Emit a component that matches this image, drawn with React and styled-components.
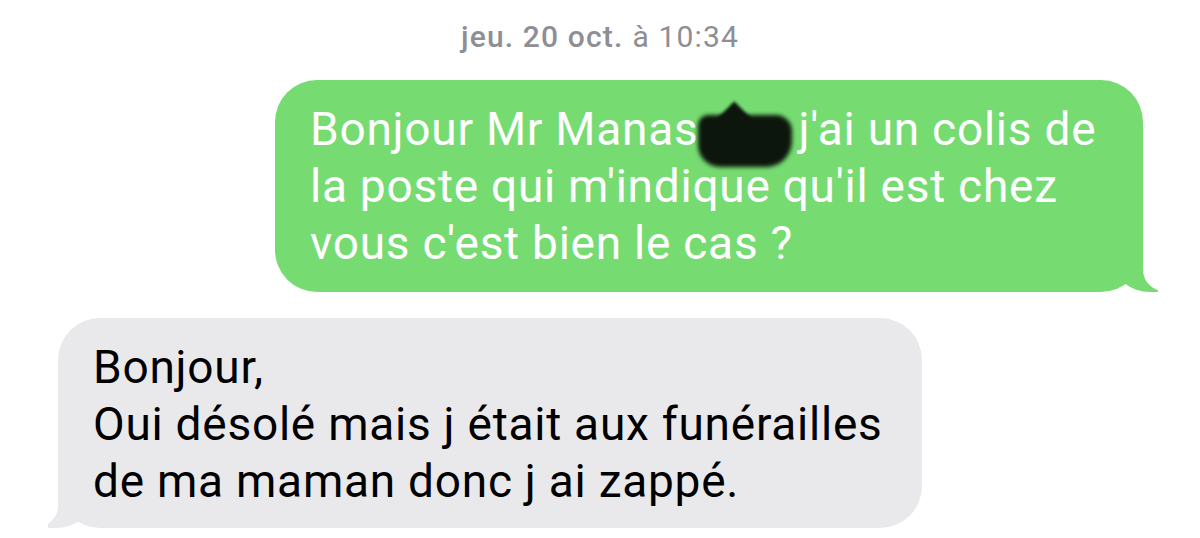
import React from 'react';
import styled, { createGlobalStyle } from 'styled-components';

const GlobalStyle = createGlobalStyle`
  html, body {
    margin: 0;
    padding: 0;
    background: #ffffff;
  }
  body {
    font-family: Roboto, "Liberation Sans", Arial, sans-serif;
    -webkit-font-smoothing: antialiased;
  }
`;

const Thread = styled.div`
  width: 1200px;
  height: 538px;
  overflow: hidden;
  display: flex;
  flex-direction: column;
  background: #ffffff;
`;

const Stamp = styled.div`
  height: 80px;
  display: flex;
  justify-content: center;
  align-items: flex-start;
  padding: 19px 0 0 0;
  box-sizing: border-box;
  font-size: 30px;
  color: #8e8e93;
  letter-spacing: 1.15px;

  b {
    font-weight: 500;
    margin-right: 9px;
  }
`;

const Row = styled.div`
  display: flex;
  justify-content: ${(p) => (p.$mine ? 'flex-end' : 'flex-start')};
  padding: ${(p) => (p.$mine ? '0 57px 0 0' : '0 0 0 58px')};
  margin-bottom: ${(p) => (p.$mine ? '26px' : '0')};
`;

const Bubble = styled.div`
  position: relative;
  width: ${(p) => p.$width}px;
  height: ${(p) => p.$height}px;
  box-sizing: border-box;
  padding: 21px 0 0 35px;
  border-radius: 42px;
  background: ${(p) => (p.$mine ? '#76dc72' : '#e9e9eb')};
  color: ${(p) => (p.$mine ? '#ffffff' : '#000000')};
  font-size: 46px;
  line-height: 57px;
  letter-spacing: 0.75px;

  &::before {
    content: '';
    position: absolute;
    bottom: 0;
    ${(p) => (p.$mine ? 'right: -15px;' : 'left: -10px;')}
    width: 44px;
    height: 46px;
    background: ${(p) => (p.$mine ? '#76dc72' : '#e9e9eb')};
    ${(p) =>
      p.$mine
        ? 'border-bottom-left-radius: 36px 30px;'
        : 'border-bottom-right-radius: 36px 30px;'}
  }

  &::after {
    content: '';
    position: absolute;
    bottom: 0;
    ${(p) => (p.$mine ? 'right: -60px;' : 'left: -60px;')}
    width: 60px;
    height: 48px;
    background: #ffffff;
    ${(p) =>
      p.$mine
        ? 'border-bottom-left-radius: 24px 22px;'
        : 'border-bottom-right-radius: 24px 22px;'}
  }
`;

const Line = styled.div`
  position: relative;
  z-index: 1;
  white-space: nowrap;
`;

// the blacked-out part of the name
const Scribble = styled.span`
  display: inline-block;
  position: relative;
  width: 100px;
  height: 1em;
  vertical-align: -6px;

  &::before {
    content: '';
    position: absolute;
    left: 0;
    top: 10px;
    width: 94px;
    height: 52px;
    background: #0d160d;
    border-radius: 10px 16px 26px 22px;
    filter: blur(2px);
  }

  &::after {
    content: '';
    position: absolute;
    left: 24px;
    top: 2px;
    width: 26px;
    height: 24px;
    background: #0d160d;
    transform: rotate(45deg);
    filter: blur(1.5px);
  }
`;

export default function App() {
  return (
    <>
      <GlobalStyle />
      <Thread>
        <Stamp>
          <b>jeu. 20 oct.</b>
          <span>à 10:34</span>
        </Stamp>

        <Row $mine>
          <Bubble $mine $width={868} $height={212}>
            <Line>
              Bonjour Mr Manas<Scribble />j'ai un colis de
            </Line>
            <Line>la poste qui m'indique qu'il est chez</Line>
            <Line>vous c'est bien le cas ?</Line>
          </Bubble>
        </Row>

        <Row>
          <Bubble $width={864} $height={210}>
            <Line>Bonjour,</Line>
            <Line>Oui désolé mais j était aux funérailles</Line>
            <Line>de ma maman donc j ai zappé.</Line>
          </Bubble>
        </Row>
      </Thread>
    </>
  );
}
